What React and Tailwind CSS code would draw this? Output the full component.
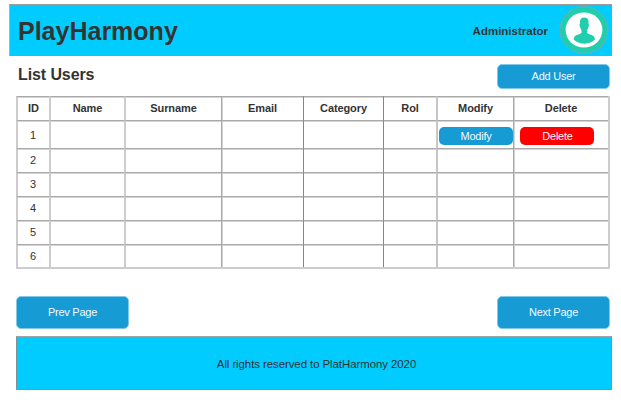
const columns = [
  { label: 'ID', line: 'border-l-2 border-l-[#cccccc]' },
  { label: 'Name', line: 'border-l-2 border-l-[#cccccc]' },
  { label: 'Surname', line: 'border-l-2 border-l-[#cccccc]' },
  { label: 'Email', line: 'border-l border-l-[#a8a8a8] shadow-[inset_1px_1px_0_#d4d4d4]' },
  { label: 'Category', line: 'border-l border-l-[#868686]' },
  { label: 'Rol', line: 'border-l border-l-[#868686]' },
  { label: 'Modify', line: 'border-l-2 border-l-[#c6c6c6]' },
  { label: 'Delete', line: 'border-l border-l-[#a8a8a8] shadow-[inset_1px_1px_0_#d4d4d4]' },
];

const userIds = [1, 2, 3, 4, 5, 6];

function Cell({ line, className = '', children }) {
  return (
    <div
      className={`flex items-center justify-center border-t border-t-[#a9a9a9] shadow-[inset_0_1px_0_#d4d4d4] ${line} ${className}`}
    >
      {children}
    </div>
  );
}

function Button({ className = 'bg-[#169bd5]', children }) {
  return (
    <button
      className={`flex items-center justify-center rounded-[5px] text-[11px] leading-none tracking-[-0.25px] text-[#f2f9fd] ${className}`}
    >
      {children}
    </button>
  );
}

function Avatar() {
  return (
    <svg width="50" height="50" viewBox="0 0 50 50" className="shrink-0">
      <ellipse cx="25" cy="25" rx="24" ry="23.3" fill="#20cdad" stroke="#a3a09c" strokeWidth="1" strokeDasharray="2 1" />
      <ellipse cx="25" cy="25" rx="18.4" ry="17.6" fill="#fff" />
      <path
        d="M25.2 12.500C22.500 12.500 21 14 21 16.500V19C20.300 19.500 20.400 21.500 21.200 22.200C21.500 23.600 21.900 24.600 22.500 25.300V27.800C21.500 29.300 17.800 29.600 16.200 31C15.100 32 14.700 33.300 14.600 34.600C17.200 37.200 21 38.700 25.300 38.700S33.400 37.200 36 34.600C35.900 33.300 35.500 32 34.400 31C32.800 29.600 29 29.300 28 27.800V25.300C28.600 24.600 29 23.600 29.300 22.200C30.100 21.500 30.200 19.500 29.500 19V16.500C29.500 14 27.900 12.500 25.200 12.500Z"
        fill="#20cdad"
      />
    </svg>
  );
}

export default function App() {
  return (
    <div className="h-[411px] w-[621px] overflow-hidden bg-white pt-1 pl-[9px] font-['Liberation_Sans',Arial,sans-serif] text-[#333333]">
      <header className="flex h-[52px] w-[603px] items-center border border-[#8c9a9d] border-t-[#9c9c9c] border-l-[#a5b5b8] bg-[#00ccff] pr-[2px] pl-2">
        <h1 className="pt-[2px] text-[25px] leading-none font-bold">PlayHarmony</h1>
        <span className="mr-[11px] ml-auto pt-[3px] text-[11.5px] leading-none font-bold">Administrator</span>
        <Avatar />
      </header>

      <main className="pl-[7px]">
        <div className="flex h-10 w-[594px] items-start justify-between pt-2">
          <h2 className="pt-[3px] pl-[2px] text-[16px] leading-none font-bold tracking-[-0.1px]">List Users</h2>
          <Button className="h-[25px] w-[113px] border border-[#84c8e8] bg-[#169bd5]">Add User</Button>
        </div>

        <div className="grid w-[594px] grid-cols-[33px_75px_97px_82px_80px_53px_77px_95px] grid-rows-[24px_28px_24px_24px_24px_24px_23px] border-r-2 border-b-2 border-[#cccccc] text-[11px] leading-none">
          {columns.map((column) => (
            <Cell key={column.label} line={column.line} className="font-bold tracking-[-0.1px]">
              {column.label}
            </Cell>
          ))}
          {userIds.map((id) =>
            columns.map((column, index) => (
              <Cell key={`${id}-${column.label}`} line={column.line} className={id === 1 ? 'pt-[2px]' : ''}>
                {index === 0 && <span className="-ml-px">{id}</span>}
                {id === 1 && column.label === 'Modify' && (
                  <Button className="h-[18px] w-[74px] bg-[#169bd5] pt-[2px] pl-px">Modify</Button>
                )}
                {id === 1 && column.label === 'Delete' && (
                  <Button className="mr-2 h-[18px] w-[74px] bg-[#ff0000] pt-[2px] pl-px">Delete</Button>
                )}
              </Cell>
            )),
          )}
        </div>

        <div className="mt-[27px] flex w-[594px] justify-between">
          <Button className="h-[33px] w-[113px] border border-[#84c8e8] bg-[#169bd5]">Prev Page</Button>
          <Button className="h-[33px] w-[113px] border border-[#84c8e8] bg-[#169bd5]">Next Page</Button>
        </div>

        <footer className="mt-[7px] flex h-[54px] w-[596px] items-center justify-center border border-[#7f9298] border-t-[#a0a4a4] bg-[#00ccff] pt-[3px] pl-[5px] text-[11.5px] leading-none tracking-[-0.1px]">
          All rights reserved to PlatHarmony 2020
        </footer>
      </main>
    </div>
  );
}
